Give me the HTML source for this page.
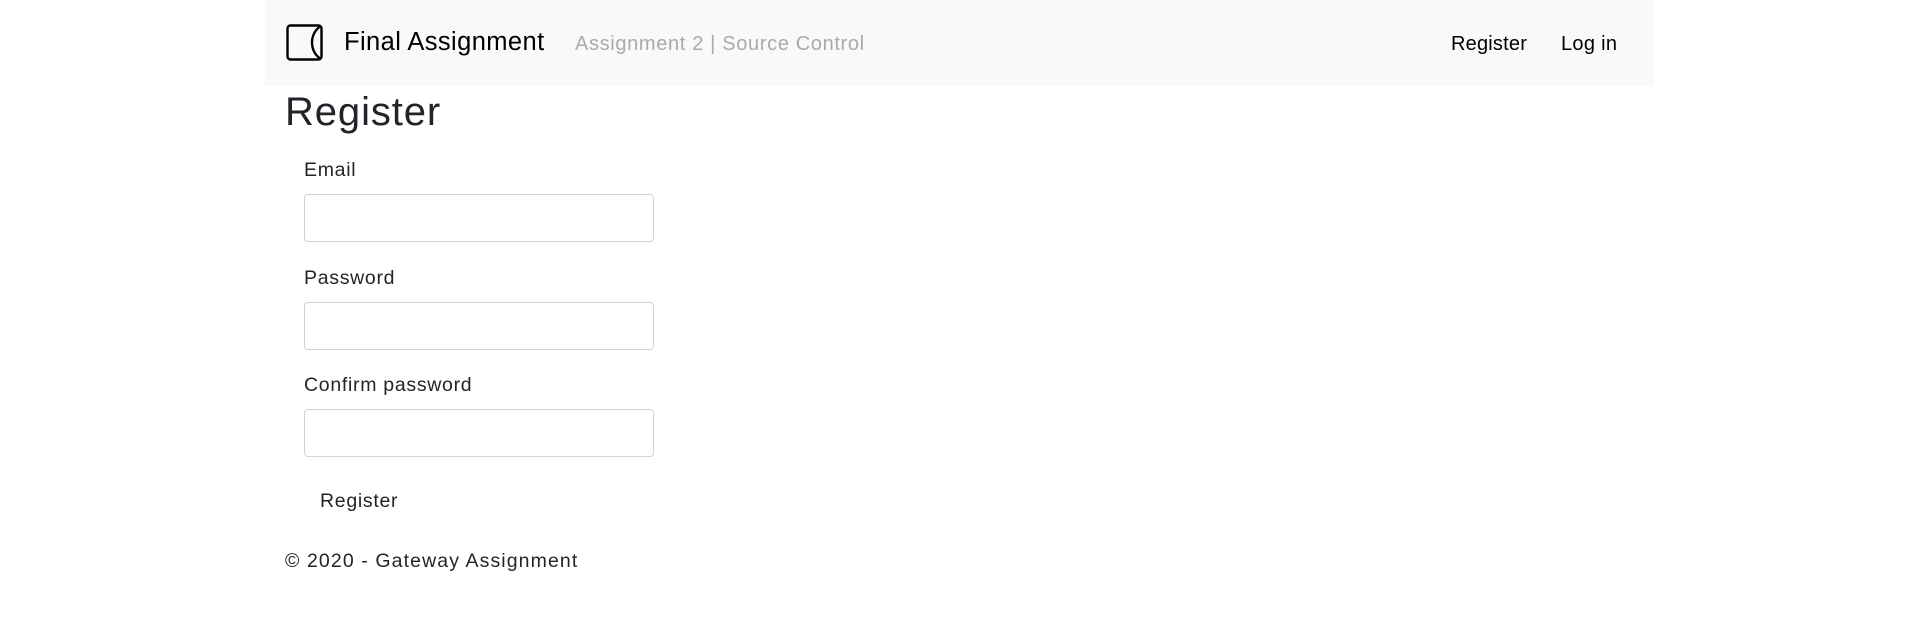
<!DOCTYPE html>
<html><head><meta charset="utf-8"><style>
body{margin:0;background:#fff;font-family:"Liberation Sans",sans-serif;color:#212529;width:1920px;height:617px;overflow:hidden;position:relative}
.nav{position:absolute;left:265px;top:0;width:1389px;height:86px;background:#f8f9fa}
.a{position:absolute;white-space:nowrap}
.inp{position:absolute;left:304px;width:348px;height:46px;border:1px solid #ced4da;border-radius:4px;background:#fff}
.lab{position:absolute;left:304px;font-size:19.5px;letter-spacing:0.7px}
</style></head><body>
<div class="nav"></div>
<svg class="a" style="left:285px;top:23px" width="40" height="40" viewBox="0 0 40 40"><rect x="2.5" y="2.5" width="34" height="34" rx="3" fill="none" stroke="#000" stroke-width="2.4"/><path d="M36 3C24 10 24 29 36 36" fill="none" stroke="#000" stroke-width="2.4"/></svg>
<div class="a" style="left:344px;top:28px;font-size:25.5px;color:#000;letter-spacing:0.4px">Final Assignment</div>
<div class="a" style="left:575px;top:33px;font-size:20px;color:#aaa;letter-spacing:0.65px">Assignment 2 | Source Control</div>
<div class="a" style="left:1451px;top:33px;font-size:20px;color:#000;letter-spacing:0.2px">Register</div>
<div class="a" style="left:1561px;top:33px;font-size:20px;color:#000;letter-spacing:0.3px">Log in</div>
<div class="a" style="left:285px;top:90px;font-size:40px;letter-spacing:0.9px">Register</div>
<div class="lab" style="top:159px">Email</div>
<div class="inp" style="top:194px"></div>
<div class="lab" style="top:267px">Password</div>
<div class="inp" style="top:302px"></div>
<div class="lab" style="top:374px">Confirm password</div>
<div class="inp" style="top:409px"></div>
<div class="a" style="left:320px;top:490px;font-size:19.5px;letter-spacing:0.7px">Register</div>
<div class="a" style="left:285px;top:550px;font-size:19.5px;letter-spacing:1.1px">© 2020 - Gateway Assignment</div>
</body></html>
